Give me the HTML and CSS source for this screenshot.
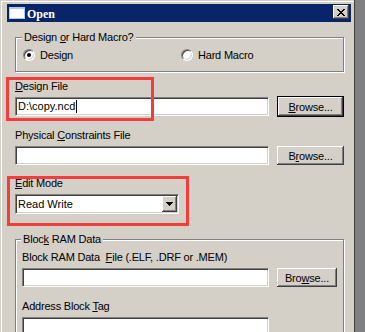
FILE: index.html
```html
<!DOCTYPE html>
<html>
  <head>
    <title>Open</title>
    <meta name="viewport" content="width=device-width, initial-scale=1.0" />
    <link rel="stylesheet" href="styles.css">
  </head>
  <body>
    <div class="window">
      <div class="titlebar">
        <span class="app-icon"></span>
        <span class="title">Open</span>
        <button type="button" class="close-btn">
          <svg width="8" height="7" viewBox="0 0 8 7" shape-rendering="crispEdges">
            <path d="M0 0h2v1H0zM6 0h2v1H6zM1 1h2v1H1zM5 1h2v1H5zM2 2h4v1H2zM3 3h2v1H3zM2 4h4v1H2zM1 5h2v1H1zM5 5h2v1H5zM0 6h2v1H0zM6 6h2v1H6z" fill="#000"/>
          </svg>
        </button>
      </div>

      <div class="content">
        <fieldset class="group group-mode">
          <legend>Design <u>o</u>r Hard Macro?</legend>
          <div class="radio-row">
            <label class="radio-item radio-first"><span class="radio checked"></span>Design</label>
            <label class="radio-item"><span class="radio"></span>Hard Macro</label>
          </div>
        </fieldset>

        <div class="field field-design">
          <div class="label"><u>D</u>esign File</div>
          <div class="row">
            <div class="textbox">D:\copy.ncd<span class="caret"></span></div>
            <button type="button" class="btn btn-default"><u>B</u>rowse...</button>
          </div>
        </div>

        <div class="field field-physical">
          <div class="label">Physical <u>C</u>onstraints File</div>
          <div class="row">
            <div class="textbox"></div>
            <button type="button" class="btn">B<u>r</u>owse...</button>
          </div>
        </div>

        <div class="field field-edit">
          <div class="label"><u>E</u>dit Mode</div>
          <div class="row">
            <div class="combo">
              <span class="combo-value">Read Write</span>
              <span class="combo-btn">
                <svg width="7" height="4" viewBox="0 0 7 4" shape-rendering="crispEdges">
                  <path d="M0 0h7v1H0zM1 1h5v1H1zM2 2h3v1H2zM3 3h1v1H3z" fill="#000"/>
                </svg>
              </span>
            </div>
          </div>
        </div>

        <fieldset class="group group-bram">
          <legend>Bloc<u>k</u> RAM Data</legend>
          <div class="field">
            <div class="label">Block RAM Data&nbsp; <u>F</u>ile (.ELF, .DRF or .MEM)</div>
            <div class="row">
              <div class="textbox textbox-inner"></div>
              <button type="button" class="btn btn-small">Bro<u>w</u>se...</button>
            </div>
          </div>
          <div class="field field-tag">
            <div class="label">Address Block <u>T</u>ag</div>
            <div class="row">
              <div class="textbox textbox-inner"></div>
            </div>
          </div>
        </fieldset>
      </div>

      <!-- annotation boxes drawn over the dialog -->
      <div class="mark mark-design"></div>
      <div class="mark mark-edit"></div>
    </div>
  </body>
</html>
```

FILE: styles.css
```css
/* Classic grey dialog */
body {
  margin: 0;
  padding: 0;
  background-color: #808080;
  font-family: "Liberation Sans", Arial, sans-serif;
  font-size: 11px;
  letter-spacing: -0.2px;
  color: #000;
  overflow: hidden;
}

.window {
  position: relative;
  width: 354px;
  height: 332px;
  background-color: #d4d0c8;
  border-right: 1px solid #404040;
  box-shadow: inset 1px 1px 0 #d4d0c8, inset 2px 2px 0 #fff;
  overflow: hidden;
}

.titlebar {
  display: flex;
  align-items: flex-start;
  height: 18px;
  margin: 0 3px 0 7px;
  position: relative;
  top: 4px;
  background-color: #0a246a;
  color: #fff;
}

.app-icon {
  width: 16px;
  height: 12px;
  margin: 3px 2px 0 2px;
  box-sizing: border-box;
  background-color: #fff;
  border: 1px solid #a6caf0;
  border-top-width: 2px;
}

.title {
  flex: 1;
  font-family: "Liberation Serif", "Times New Roman", serif;
  font-weight: bold;
  font-size: 12px;
  letter-spacing: 0;
  line-height: 18px;
  padding-top: 1px;
}

.close-btn {
  width: 16px;
  height: 14px;
  margin: 1px 2px 0 0;
  padding: 0;
  border: none;
  background-color: #d4d0c8;
  box-shadow: inset -1px -1px 0 #404040, inset 1px 1px 0 #fff, inset -2px -2px 0 #808080;
  display: flex;
  align-items: center;
  justify-content: center;
}

.close-btn svg {
  display: block;
}

.content {
  padding: 4px 0 0 15px;
}

/* group boxes */
.group {
  margin: 0;
  width: 329px;
  box-sizing: border-box;
  border: 1px solid #808080;
  box-shadow: 1px 1px 0 #fff, inset 1px 1px 0 #fff;
  min-width: 0;
}

.group legend {
  padding: 0 2px;
  margin-left: -1px;
  line-height: 13px;
  background-color: #d4d0c8;
}

.group-mode {
  margin-top: 9px;
  padding: 4px 0 9px 7px;
}

.group-bram {
  margin-top: 19px;
  padding: 5px 0 20px 6px;
}

.radio-row {
  display: flex;
  height: 14px;
  line-height: 14px;
}

.radio-item {
  display: flex;
  align-items: center;
}

.radio-first {
  width: 158px;
}

.radio {
  position: relative;
  width: 12px;
  height: 12px;
  margin-right: 5px;
  box-sizing: border-box;
  border-radius: 50%;
  background-color: #fff;
  border: 1px solid;
  border-color: #808080 #fff #fff #808080;
  box-shadow: inset 1px 1px 0 #404040, inset -1px -1px 0 #d4d0c8;
}

.radio.checked::after {
  content: "";
  position: absolute;
  left: 3px;
  top: 3px;
  width: 4px;
  height: 4px;
  border-radius: 50%;
  background-color: #000;
}

/* labelled fields */
.label {
  line-height: 13px;
  height: 13px;
  white-space: nowrap;
}

.row {
  display: flex;
  align-items: center;
  margin-top: 4px;
  height: 19px;
}

.field-design {
  margin-top: 8px;
}

.field-physical {
  margin-top: 13px;
}

.field-edit {
  margin-top: 12px;
}

.field-edit .row {
  height: 20px;
}

.field-tag {
  margin-top: 13px;
}

.textbox {
  position: relative;
  width: 254px;
  height: 19px;
  box-sizing: border-box;
  padding-left: 2px;
  line-height: 17px;
  letter-spacing: 0;
  background-color: #fff;
  border: 1px solid;
  border-color: #808080 #fff #fff #808080;
  box-shadow: inset 1px 1px 0 #404040, inset -1px -1px 0 #d4d0c8;
  white-space: nowrap;
}

.textbox-inner {
  width: 247px;
}

.caret {
  display: inline-block;
  width: 1px;
  height: 13px;
  margin-left: 1px;
  vertical-align: -3px;
  background-color: #000;
}

.btn {
  width: 67px;
  height: 19px;
  margin-left: 8px;
  padding: 0;
  border: none;
  background-color: #d4d0c8;
  font-family: inherit;
  font-size: 11px;
  letter-spacing: -0.2px;
  color: #000;
  box-shadow: inset -1px -1px 0 #404040, inset 1px 1px 0 #fff, inset -2px -2px 0 #808080;
}

.btn-default {
  height: 21px;
  border: 1px solid #000;
}

.btn-small {
  width: 60px;
}

.combo {
  display: flex;
  width: 164px;
  height: 20px;
  box-sizing: border-box;
  background-color: #fff;
  border: 1px solid;
  border-color: #808080 #fff #fff #808080;
  box-shadow: inset 1px 1px 0 #404040, inset -1px -1px 0 #d4d0c8;
}

.combo-value {
  flex: 1;
  padding-left: 2px;
  line-height: 18px;
  letter-spacing: 0;
}

.combo-btn {
  width: 15px;
  height: 16px;
  margin: 1px 1px 0 0;
  background-color: #d4d0c8;
  box-shadow: inset -1px -1px 0 #404040, inset 1px 1px 0 #fff, inset -2px -2px 0 #808080;
  display: flex;
  align-items: center;
  justify-content: center;
}

.combo-btn svg {
  display: block;
}

/* red annotation rectangles */
.mark {
  position: absolute;
  box-sizing: border-box;
  border: 3px solid #f43c3c;
}

.mark-design {
  left: 6px;
  top: 77px;
  width: 148px;
  height: 44px;
}

.mark-edit {
  left: 7px;
  top: 176px;
  width: 182px;
  height: 50px;
}
```
